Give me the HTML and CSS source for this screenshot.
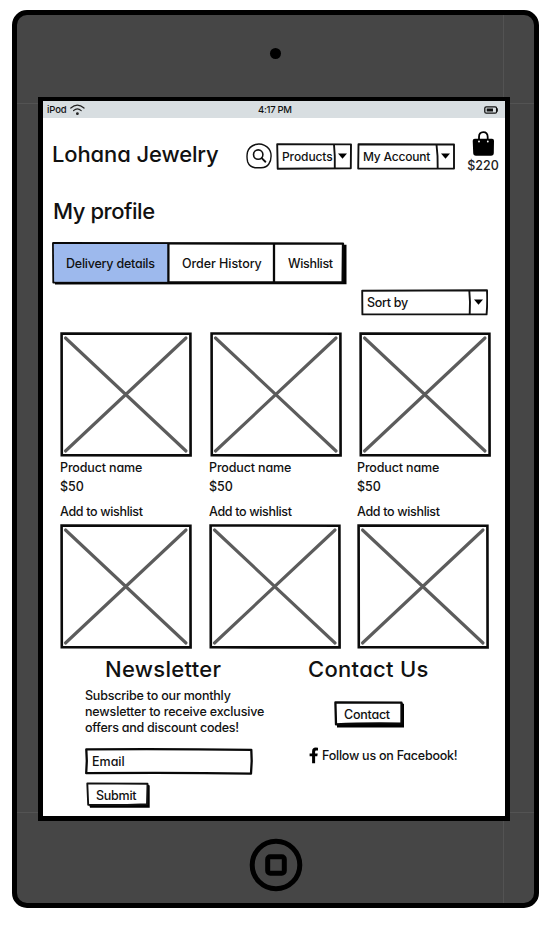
FILE: index.html
```html
<!DOCTYPE html>
<html lang="en">
<head>
<meta charset="utf-8">
<title>Lohana Jewelry – My profile</title>
<link rel="stylesheet" href="styles.css">
</head>
<body>
<svg class="defs" aria-hidden="true">
  <symbol id="photo" viewBox="0 0 132 125">
    <path d="M1.6 1.5 130.4 1.7 130.6 123.4 1.8 123.3Z" fill="#fff" stroke="#0b0b0b" stroke-width="2.6"/>
    <path d="M5.5 6 126 119M126 6 5.5 119" fill="none" stroke="#5c5c5c" stroke-width="3.1" stroke-linecap="round"/>
  </symbol>
</svg>
<div class="device">
  <i class="seam seam-v"></i><i class="seam seam-top"></i><i class="seam seam-bottom"></i>
  <div class="camera"></div>
  <div class="screen">
    <div class="status">
      <span class="carrier">iPod</span>
      <svg class="wifi" width="15" height="12" viewBox="0 0 15 12" fill="none" stroke="#222" stroke-width="1.2" stroke-linecap="round"><path d="M.8 4Q7.3-1.8 14 4M3.5 6.6Q7.3 3.2 11.2 6.6"/><circle cx="7.4" cy="9.7" r=".8" fill="#111"/></svg>
      <span class="time">4:17 PM</span>
      <svg class="battery" width="15" height="8" viewBox="0 0 15 8"><rect x=".8" y=".8" width="11.8" height="6.4" rx="1.5" fill="none" stroke="#111" stroke-width="1.3"/><path d="M2.7 2.5H9V5.5H2.7ZM13 2.3h.6q.7 1.7 0 3.4H13Z" fill="#111"/></svg>
    </div>
    <header class="header">
      <h1 class="brand">Lohana Jewelry</h1>
      <svg class="search" width="26" height="26" viewBox="0 0 26 26" fill="none" stroke="#111" stroke-linecap="round"><path d="M9.5 1.5Q14 .3 18.5 2.3 24 5 24.9 10.5 25.7 17 22.8 21 20.5 24.5 15 24.8L9 24.7Q3.5 23.8 1.7 19 .4 14 1.5 9 3 3.5 9.5 1.5Z" stroke-width="1.4"/><circle cx="12.2" cy="11.6" r="4.7" stroke-width="1.6"/><path d="m15.7 15.1 3.7 3.6" stroke-width="1.9"/></svg>
      <div class="select products"><svg class="frame" viewBox="0 0 76 27"><path d="M1.2 1.2 75 1.4 74.8 25.3 1.7 25.7Z" class="ink"/><path d="M58 1.5Q59.2 13 58.8 25.4" class="ink"/><path d="M62 10.5h9l-4.5 5.3Z"/></svg><span class="t">Products</span></div>
      <div class="select account"><svg class="frame" viewBox="0 0 98 27"><path d="M1.5 1.2 97 1.5 97 25.6 1.2 25.6Z" class="ink"/><path d="M79.5 1.5Q81 13 80.7 25.4" class="ink"/><path d="M84 10.5h9l-4.5 5.3Z"/></svg><span class="t">My Account</span></div>
      <div class="cart">
        <svg width="23" height="25" viewBox="0 0 23 25"><path d="M7 9V6Q7 1.1 11.3 1.1T15.7 6V9" fill="none" stroke="#000" stroke-width="1.8"/><path d="M2.8 7.7H20Q22 7.7 22 9.8L21.8 22Q21.7 24.7 19 24.7H4Q1.3 24.7 1.2 22L.7 9.8Q.8 7.7 2.8 7.7Z"/><circle cx="7" cy="10.5" r=".9" fill="#fff"/><circle cx="15.8" cy="10.5" r=".9" fill="#fff"/></svg>
        <span class="total">$220</span>
      </div>
    </header>
    <h2 class="title">My profile</h2>
    <nav class="tabs">
      <svg class="frame" viewBox="0 0 295 43"><path d="M3 40V42.6L294.5 42.2V2.8H291V40Z"/><path d="M1.2 1.2 291 1.6 290.6 40.3 1.5 40.4Z" class="ink2"/><path d="M1.8 2 116 2V39.8L2.2 39.8Z" fill="#9db9ed"/><path d="M116.4 1.5V40.2M222 1.5V40.2" class="ink2"/></svg>
      <a class="tab t delivery">Delivery details</a><a class="tab t history">Order History</a><a class="tab t wish">Wishlist</a>
    </nav>
    <div class="select sort"><svg class="frame" viewBox="0 0 127 27"><path d="M1.2 1.7 126 1.2Q126.6 13 125.6 25.3L1.4 25.4Z" class="ink"/><path d="M108.3 1.5Q109.5 13 108.7 25.4" class="ink"/><path d="M113 10.5h9l-4.5 5.3Z"/></svg><span class="t">Sort by</span></div>
    <section class="grid">
      <article><svg class="photo"><use href="#photo"/></svg><p class="t name">Product name</p><p class="t price">$50</p><p class="t add">Add to wishlist</p></article>
      <article><svg class="photo nudge-1"><use href="#photo"/></svg><p class="t name">Product name</p><p class="t price">$50</p><p class="t add">Add to wishlist</p></article>
      <article><svg class="photo nudge-2"><use href="#photo"/></svg><p class="t name">Product name</p><p class="t price">$50</p><p class="t add">Add to wishlist</p></article>
      <article><svg class="photo"><use href="#photo"/></svg></article>
      <article><svg class="photo"><use href="#photo"/></svg></article>
      <article><svg class="photo"><use href="#photo"/></svg></article>
    </section>
    <footer class="footer">
      <section class="newsletter">
        <h3 class="head news-head">Newsletter</h3>
        <p class="t copy"><span class="l1">Subscribe to our monthly</span><br><span class="l2">newsletter to receive exclusive</span><br><span class="l3">offers and discount codes!</span></p>
        <div class="email"><svg class="frame" viewBox="0 0 168 27"><path d="M1.3 1.4Q80 .8 166.3 1.8L166.7 13 166 25.6Q90 24.4 1.2 25.2L1.8 13Z" class="ink2"/></svg><span class="t">Email</span></div>
        <div class="button submit"><svg class="frame" viewBox="0 0 64 27"><path d="M3 22 4 25.8H63.7V3.5L61 2V23Z"/><path d="M1.3 1.4 61.5 1.7 61 22.2Q30 23.5 2.2 22.8Z" class="ink"/></svg><span class="t">Submit</span></div>
      </section>
      <section class="contact">
        <h3 class="head contact-head">Contact Us</h3>
        <div class="button contact-btn"><svg class="frame" viewBox="0 0 71 28"><path d="M3 22V26.4H70V3L67 1.5V22Z"/><path d="M1.4 1.4 67.5 1.7V22.6Q30 22 2 23.4Z" class="ink2"/></svg><span class="t">Contact</span></div>
        <div class="follow"><svg width="10" height="17" viewBox="0 0 10 17"><path d="M9 .7V3.5H7.2Q6.1 3.5 6.1 4.8V6.5H8.7L8.3 9.2H6.1V16.2H3.1V9.2H.6V6.5H3.1V4.2Q3.2.6 6.7.6Z"/></svg><span class="t">Follow us on Facebook!</span></div>
      </section>
    </footer>
  </div>
  <svg class="home" width="54" height="54" viewBox="0 0 54 54" fill="none" stroke="#000" stroke-width="5"><circle cx="27" cy="27" r="23.8"/><rect x="18.7" y="18.7" width="16.6" height="16.6" rx="2.5"/></svg>
</div>
</body>
</html>
```

FILE: styles.css
```css
* { box-sizing: border-box; }
body { margin: 0; background: #fff; color: #111; font-family: Inter, "Liberation Sans", sans-serif; font-weight: 500; font-feature-settings: "cv11" 1, "calt" 0; }
h1, h2, h3, p { margin: 0; font-weight: 500; }
.defs { position: absolute; width: 0; height: 0; }
.device { position: relative; width: 527px; height: 898px; margin: 10px 0 0 12px; border: 5px solid #000; border-radius: 15px; background: #464646; display: flex; flex-direction: column; overflow: hidden; }
.camera { width: 11px; height: 11px; border-radius: 50%; background: #000; margin: 33px 0 0 253px; }
.screen { position: relative; width: 472px; height: 724px; margin: 38px 0 0 21px; border: 5px solid #000; border-top-width: 4px; background: #fff; flex: none; }
.home { margin: 17px 0 0 231.5px; flex: none; }
.seam { position: absolute; background: #535353; }
.seam-v { left: 486px; top: 0; width: 1px; height: 100%; }
.seam-top { left: 0; top: 88px; width: 100%; height: 1px; }
.seam-bottom { left: 0; top: 797px; width: 100%; height: 1px; }

.status { display: flex; align-items: center; height: 17px; background: #d8dee1; font-size: 9.5px; line-height: 16px; padding: 0 6px 0 4px; }
.carrier { width: 20px; letter-spacing: -.1px; }
.wifi { margin-left: 3px; }
.time { margin-left: 173px; letter-spacing: -.3px; }
.battery { margin-left: auto; }

.t { display: block; font-size: 12.5px; line-height: 16px; letter-spacing: -.24px; white-space: nowrap; transform: translateY(1px); }
.frame { position: absolute; left: 0; top: 0; width: 100%; height: 100%; z-index: -1; }
.ink { fill: #fff; stroke: #111; stroke-width: 1.9; stroke-linejoin: round; }
.ink2 { fill: #fff; stroke: #080808; stroke-width: 2.3; stroke-linejoin: round; }

.header { display: flex; height: 78px; padding: 0 6px 0 9px; }
.brand { width: 194px; margin-top: 21px; font-size: 22px; line-height: 30px; letter-spacing: -.12px; white-space: nowrap; flex: none; }
.search { margin-top: 25px; flex: none; }
.select, .email, .button { position: relative; z-index: 0; flex: none; }
.select { height: 27px; padding: 5px 0 0 6px; }
.products { width: 76px; margin: 25px 0 0 4px; }
.products .t { font-size: 12px; letter-spacing: -.1px; }
.account { width: 98px; margin: 25px 0 0 5px; }
.account .t { font-size: 12px; letter-spacing: -.2px; }
.cart { width: 34px; margin: 13px 0 0 12px; display: flex; flex-direction: column; align-items: center; }
.total { font-size: 12.5px; line-height: 16px; margin-top: 2px; color: #222; }

.title { font-size: 22px; line-height: 30px; height: 46px; padding: 0 0 0 10px; letter-spacing: -.45px; }
.tabs { position: relative; z-index: 0; display: flex; width: 295px; height: 43px; margin-left: 9px; padding-top: 13px; }
.delivery { width: 116px; padding-left: 14px; letter-spacing: -.23px; }
.history { width: 106px; padding-left: 14px; letter-spacing: -.06px; }
.wish { padding-left: 14px; letter-spacing: -.3px; }
.sort { width: 127px; margin: 4px 0 0 318px; }
.sort .t { letter-spacing: -.3px; }

.grid { display: grid; grid-template-columns: 149px 148px 133px; grid-template-rows: 192px 125px; margin: 16px 0 0 17px; }
.photo { display: block; width: 132px; height: 125px; }
.nudge-1 { margin-left: 1px; }
.nudge-2 { margin-left: 2px; }
.name { margin-top: 2px; letter-spacing: -.14px; }
.price { margin-top: 3px; letter-spacing: 0; }
.add { margin-top: 9px; letter-spacing: -.33px; }

.footer { display: grid; grid-template-columns: 223px 1fr; padding-left: 42px; }
.head { font-size: 22px; line-height: 30px; white-space: nowrap; letter-spacing: .3px; }
.news-head { margin: 5px 0 0 20px; }
.copy { margin-top: 3px; }
.l1 { letter-spacing: -.2px; }
.l2 { letter-spacing: -.15px; }
.email { width: 168px; height: 27px; margin-top: 13px; padding: 5px 0 0 7px; }
.email .t { letter-spacing: 0; }
.submit { width: 64px; height: 27px; margin: 7px 0 0 1px; padding: 5px 0 0 10px; }
.contact-head { margin-top: 5px; }
.contact-btn { width: 71px; height: 28px; margin: 17px 0 0 26px; padding: 5px 0 0 10px; }
.follow { display: flex; align-items: flex-start; gap: 3px; margin: 18px 0 0 1px; }
```
